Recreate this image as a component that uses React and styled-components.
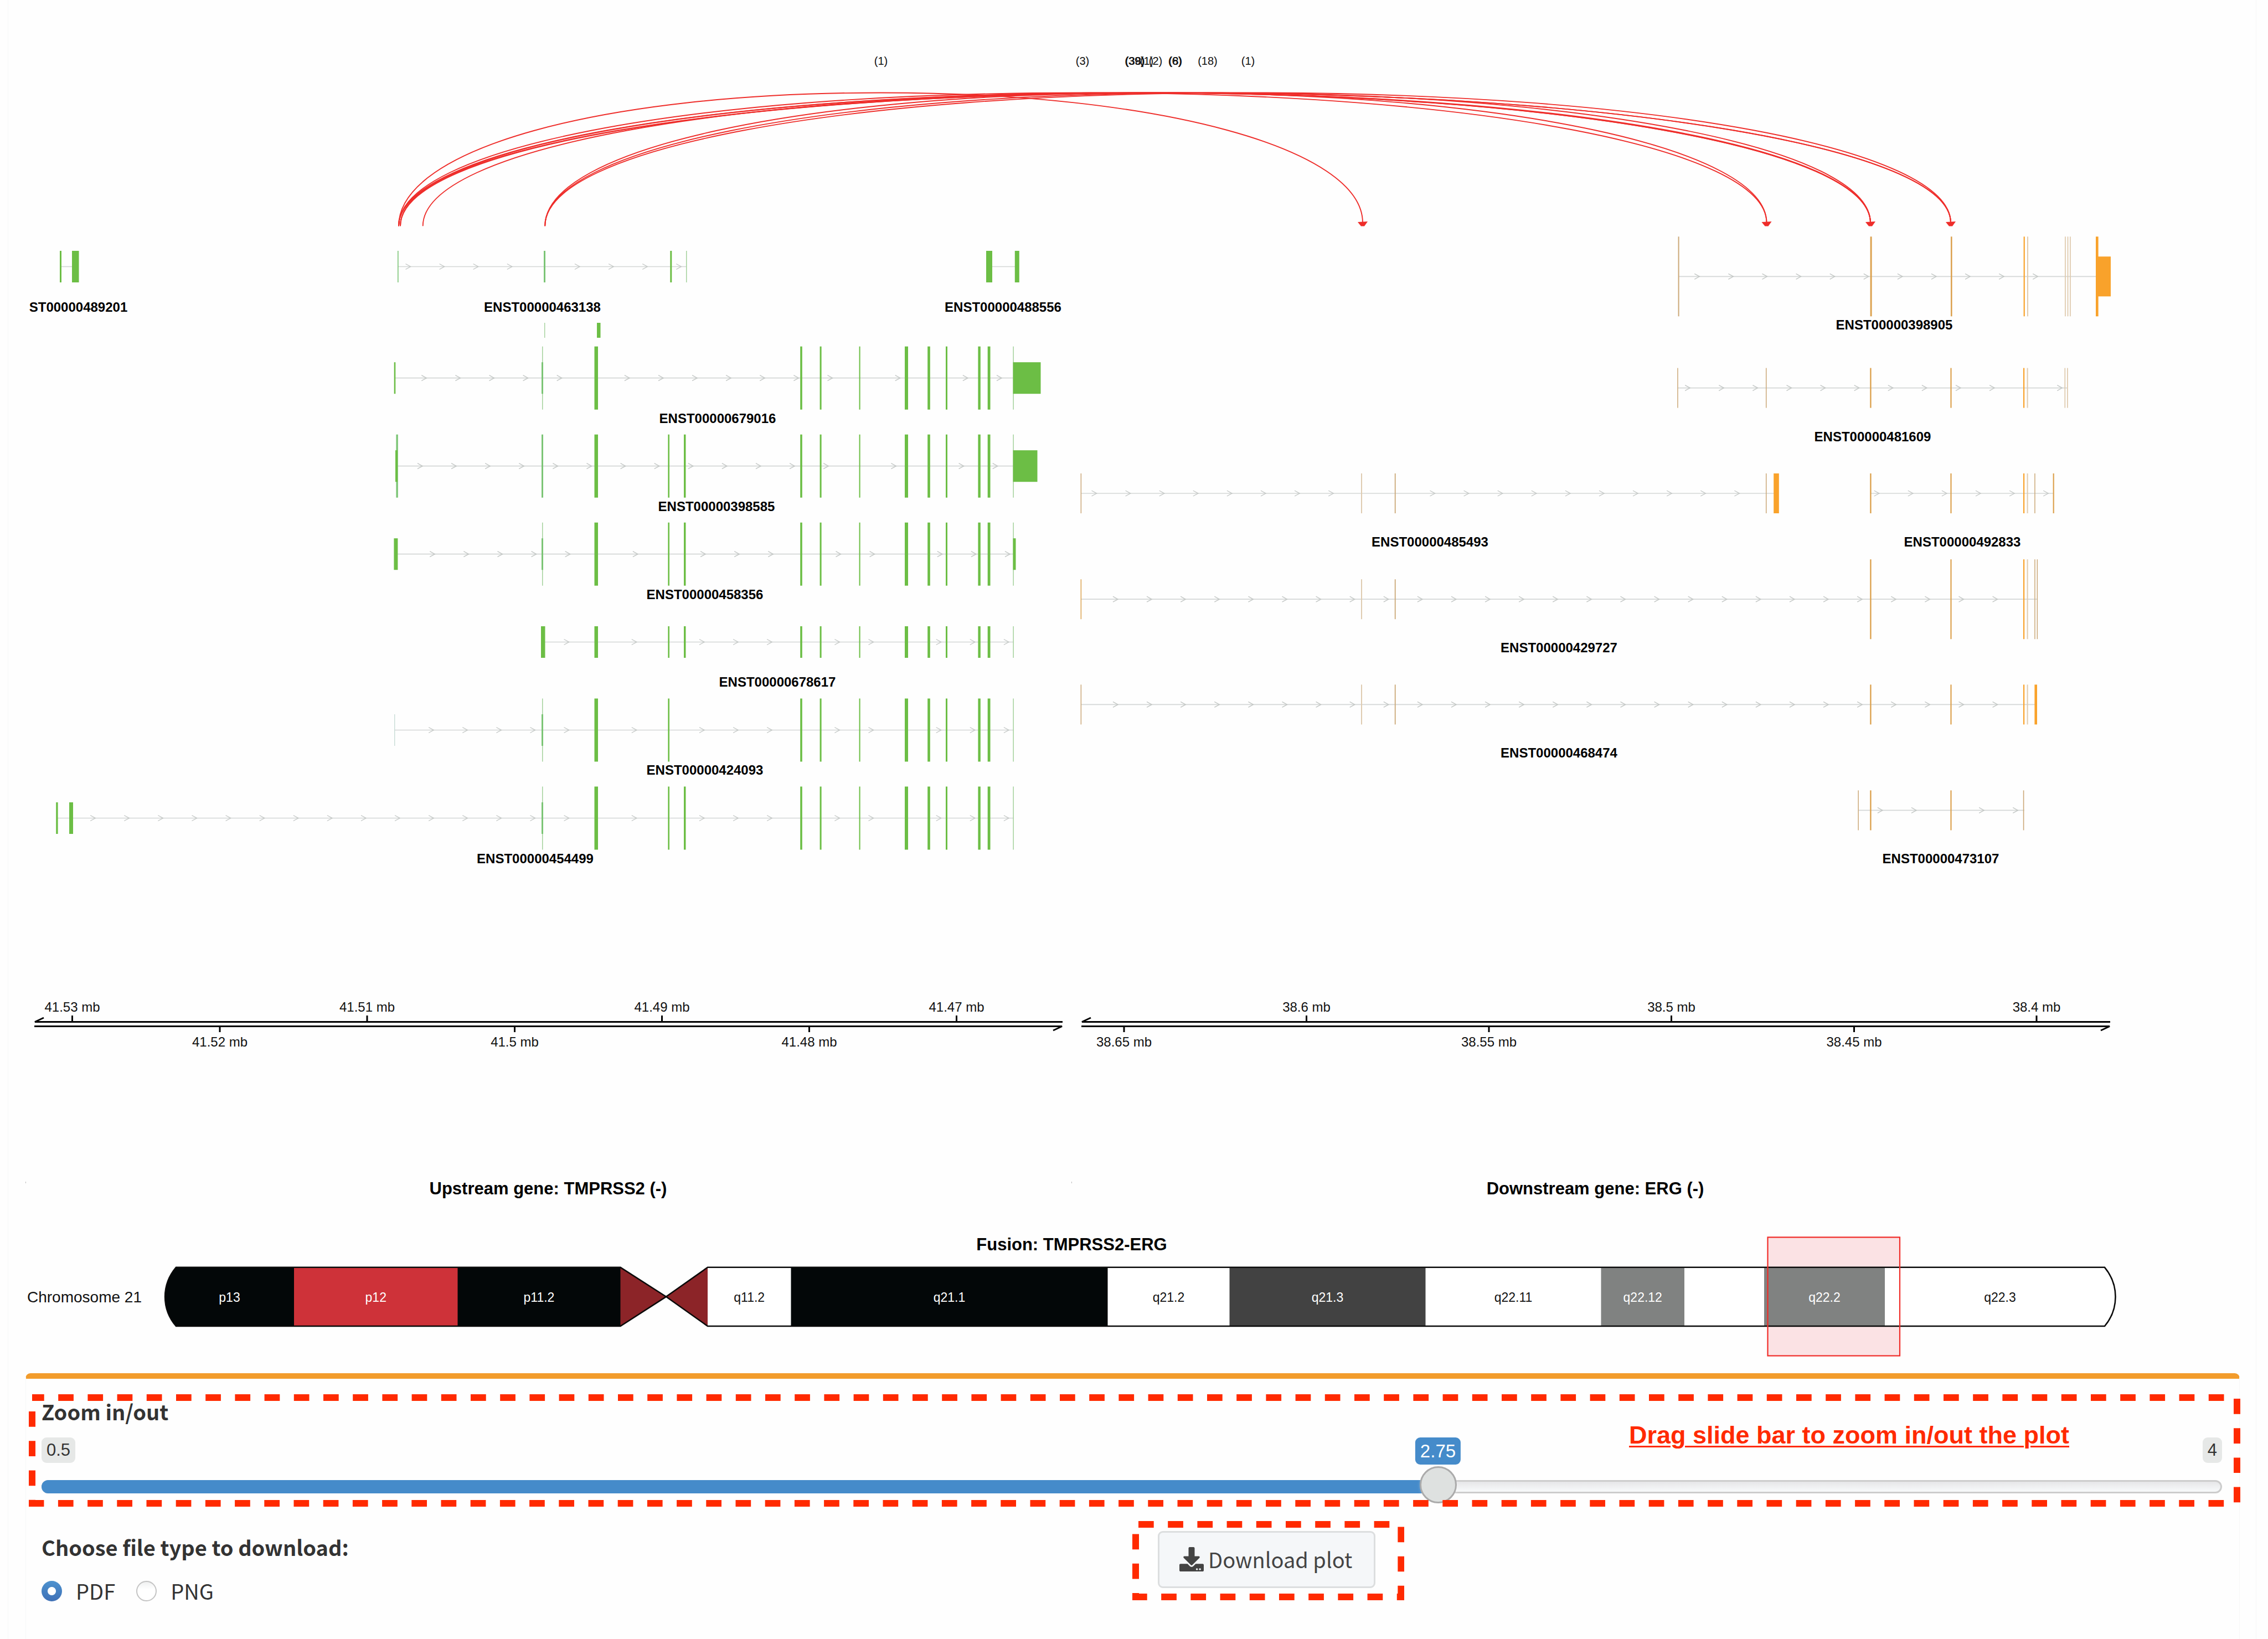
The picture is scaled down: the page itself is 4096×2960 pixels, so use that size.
import React, { useState } from "react";
import styled, { createGlobalStyle } from "styled-components";
import { FaDownload } from "react-icons/fa";

const GREEN = "#6cbe45";
const GREEN_THIN = "#7cc576";
const GREEN_PALE = "#a3d19b";
const ORANGE = "#f9a22b";
const ORANGE_THIN = "#dca250";
const TAN = "#cba878";
const TAN_PALE = "#dfcbb0";
const RED = "#ee2d2a";
const MARK_RED = "#ff2a00";

const GlobalStyle = createGlobalStyle`
  *, *::before, *::after { box-sizing: border-box; }
  body {
    margin: 0;
    background: #fefefe;
    color: #333;
    font-family: "Noto Sans CJK SC", "Open Sans", sans-serif;
    font-size: 38px;
    line-height: 54px;
  }
`;

const Page = styled.main`
  min-height: 100vh;
  padding: 0 21px 0 14px;
  display: flex;
  flex-direction: column;
`;

const Frame = styled.div`
  flex: 1;
  display: flex;
  flex-direction: column;
  border: solid #f6f7f7;
  border-width: 0 1px;
`;

const Plot = styled.svg`
  display: block;
  width: 100%;
  height: auto;
  font-family: "Liberation Sans", Arial, sans-serif;
`;

const TranscriptName = styled.text`
  font-size: 24px;
  font-weight: 700;
  text-anchor: middle;
  fill: #000;
`;

const ReadCount = styled.text`
  font-size: 20px;
  text-anchor: middle;
  fill: #111;
`;

const AxisLabel = styled.text`
  font-size: 24px;
  text-anchor: middle;
  fill: #111;
`;

const PlotTitle = styled.text`
  font-size: 31px;
  font-weight: 700;
  text-anchor: middle;
  fill: #000;
`;

const BandLabel = styled.text`
  font-size: 23px;
  text-anchor: middle;
  fill: ${(p) => p.$color};
`;

const ChromosomeLabel = styled.text`
  font-size: 28px;
  fill: #111;
`;

const Panel = styled.section`
  flex: 1;
  margin: 0 29px 0 31px;
  padding: 28px 31px 0 28px;
  border: 1px solid #f6f7f7;
  border-top: 10px solid #f29c2c;
  border-bottom: 0;
  border-radius: 9px 9px 0 0;
`;

const ZoomGroup = styled.div`
  position: relative;
  padding: 4px 0 6px;
`;

const FieldLabel = styled.label`
  display: block;
  font-weight: 700;
`;

const GroupTitle = styled.legend`
  padding: 2px 0 0;
  font-weight: 700;
`;

const Scale = styled.div`
  position: relative;
  display: flex;
  justify-content: space-between;
  align-items: flex-start;
  height: 49px;
  margin: 20px 0 3px;
  font-family: "Liberation Sans", Arial, sans-serif;
`;

const Limit = styled.span`
  padding: 3px 9px;
  border-radius: 9px;
  background: #e6e8e7;
  font-size: 31px;
  line-height: 40px;
`;

const Bubble = styled.output`
  position: absolute;
  top: 0;
  transform: translateX(-50%);
  padding: 3px 9px;
  border-radius: 9px;
  background: #458bca;
  color: #fff;
  font-size: 33px;
  line-height: 43px;
`;

const Hint = styled.strong`
  position: absolute;
  top: 47px;
  right: 276px;
  color: ${MARK_RED};
  font-family: "Liberation Sans", Arial, sans-serif;
  font-size: 45px;
  line-height: 54px;
  text-decoration: underline;
  text-decoration-thickness: 3px;
  text-underline-offset: 4px;
`;

const Slider = styled.div`
  display: grid;
  height: 67px;
  > * { grid-area: 1 / 1; }
`;

const Track = styled.div`
  height: 24px;
  margin-top: 25px;
  border: 3px solid #ccc;
  border-radius: 12px;
  background: linear-gradient(#e6e6e8, #f8fafb);
`;

const Fill = styled.div`
  height: 24px;
  margin-top: 25px;
  border-radius: 12px 0 0 12px;
  background: #458bca;
`;

const Range = styled.input`
  appearance: none;
  width: 100%;
  height: 67px;
  margin: 0;
  background: transparent;
  &::-webkit-slider-runnable-track { height: 67px; background: transparent; }
  &::-webkit-slider-thumb {
    appearance: none;
    width: 67px;
    height: 67px;
    border: 3px solid #ababab;
    border-radius: 50%;
    background: #dee1e0;
    box-shadow: 1px 1px 6px rgba(255, 255, 255, 0.3);
  }
`;

const Outline = styled.svg`
  position: absolute;
  top: ${(p) => p.$top}px;
  left: ${(p) => p.$left}px;
  width: calc(100% + ${(p) => p.$growX}px);
  height: calc(100% + ${(p) => p.$growY}px);
  pointer-events: none;
  rect {
    x: 6px;
    y: 6px;
    width: calc(100% - 12px);
    height: calc(100% - 12px);
    fill: none;
    stroke: ${MARK_RED};
    stroke-width: 12px;
    stroke-dasharray: 27.7 25.5;
  }
`;

const DownloadRow = styled.div`
  display: grid;
  grid-template-columns: 1fr 1fr;
  column-gap: 94px;
  align-items: start;
  margin-top: 44px;
`;

const FileTypes = styled.fieldset`
  margin: 0;
  padding: 0;
  border: 0;
`;

const Options = styled.div`
  display: flex;
  gap: 38px;
  margin-top: 25px;
`;

const Option = styled.label`
  display: flex;
  align-items: center;
  gap: 25px;
`;

const Radio = styled.input`
  appearance: none;
  width: 37px;
  height: 37px;
  margin: 0;
  border: 2px solid #c4c4c4;
  border-radius: 50%;
  background: linear-gradient(#f0f1f1, #fff 40%);
  &:checked {
    border: 0;
    background:
      radial-gradient(circle, #fff 0 7px, transparent 8px),
      linear-gradient(#4c92cf, #3f70b6);
  }
`;

const ButtonBox = styled.div`
  position: relative;
  justify-self: start;
`;

const DownloadButton = styled.button`
  display: flex;
  align-items: center;
  gap: 8px;
  height: 103px;
  padding: 0 39px 2px 36px;
  border: 3px solid #dcdedf;
  border-radius: 9px;
  background: #f5f7f9;
  color: #444;
  font: inherit;
  svg { width: 44px; height: 44px; }
`;

/* Exons are [x, width, colour]; "full" ones are coding, "half" ones untranslated. */
const CORE = {
  a: [978, 3, GREEN_THIN],
  aPale: [979, 1.5, GREEN_PALE],
  b: [1073.5, 6.5, GREEN],
  c: [1206.4, 2.6, GREEN],
  d: [1235, 3.5, GREEN],
};
const TAIL = [
  [1445.2, 3.6, GREEN], [1480.6, 3, GREEN], [1551.6, 2, GREEN], [1634, 6, GREEN],
  [1675.2, 4.6, GREEN], [1708, 3, GREEN], [1766.4, 4.4, GREEN], [1783.7, 4.8, GREEN],
  [1829.4, 1.5, GREEN_PALE],
];
const span = (from, to) => Array.from({ length: to - from + 1 }, (_, i) => from + i);
const SKIPS = [4, 6, 8, 9, 10, 12, 13, 15, 16, 17];

const UPSTREAM = [
  { axis: 481.5, label: 563, name: "ST00000489201", at: 141.5, line: [108, 140],
    half: [[108, 3, GREEN], [130, 12.5, GREEN]] },
  { axis: 481.5, label: 563, name: "ENST00000463138", at: 979.5, line: [718, 1240],
    half: [[718, 1.6, GREEN_THIN], [982, 3, GREEN_THIN], [1210.3, 3, GREEN], [1239, 1.5, GREEN_PALE]],
    tip: 741.5, arrows: [0, 1, 2, 3, 5, 6, 7, 8] },
  { axis: 481.5, label: 563, name: "ENST00000488556", at: 1811.5, line: [1785, 1838],
    half: [[1781, 11, GREEN], [1832.8, 8, GREEN]] },
  { axis: 682.7, label: 764, name: "ENST00000679016", at: 1296, line: [712, 1832],
    half: [[711.7, 2.6, GREEN], CORE.a, [1829.5, 50, GREEN]],
    full: [CORE.aPale, CORE.b, ...TAIL],
    tip: 770.3, arrows: [...span(0, 4), ...span(6, 12), 14, 16, 17] },
  { axis: 841.7, label: 923, name: "ENST00000398585", at: 1294, line: [715, 1832],
    half: [[714, 4, GREEN], [1829.5, 44, GREEN]],
    full: [[715.4, 3.4, GREEN_THIN], CORE.a, CORE.b, CORE.c, CORE.d, ...TAIL],
    tip: 763, arrows: [...span(0, 12), 14, 16, 17] },
  { axis: 1000.7, label: 1082, name: "ENST00000458356", at: 1273, line: [715, 1832],
    half: [[711.4, 7, GREEN], CORE.a, [1829.5, 5, GREEN]],
    full: [CORE.aPale, CORE.b, CORE.c, CORE.d, ...TAIL],
    tip: 785.3, arrows: [...span(0, 4), 6, ...span(8, 10), 12, 13, 15, 16, 17] },
  { axis: 1159.5, label: 1240, name: "ENST00000678617", at: 1404, line: [980, 1830],
    half: [[977, 7.5, GREEN], CORE.b, CORE.c, CORE.d, ...TAIL],
    tip: 783.2, arrows: SKIPS },
  { axis: 1318.5, label: 1399, name: "ENST00000424093", at: 1273, line: [712, 1830],
    half: [[712, 1.4, "#c9dcd6"], CORE.a],
    full: [CORE.aPale, CORE.b, CORE.c, ...TAIL],
    tip: 783.2, arrows: [...span(0, 3), ...SKIPS] },
  { axis: 1477.5, label: 1559, name: "ENST00000454499", at: 966.5, line: [103, 1830],
    half: [[101.2, 3.4, GREEN], [125, 7, GREEN], CORE.a],
    full: [CORE.aPale, CORE.b, CORE.c, CORE.d, ...TAIL],
    tip: 783.2, arrows: [...span(-10, 3), ...SKIPS] },
];

const EX = {
  e1: [1951.6, 1.5, TAN], e2: [2458, 2, TAN_PALE], e3: [2518.8, 1.8, TAN],
  e4: [3189, 1.5, TAN], e5: [3377.2, 2.4, ORANGE_THIN], e6: [3522.4, 2.2, ORANGE_THIN],
  e7: [3654, 2.2, ORANGE], e8: [3660.6, 2, TAN_PALE], e9: [3674.2, 1.5, TAN],
};

const DOWNSTREAM = [
  { axis: 499.3, name: "ENST00000398905", at: 3421, line: [3031, 3786],
    half: [[3785, 27, ORANGE]],
    full: [[3030.6, 2, TAN], [3377.6, 3, ORANGE_THIN], [3523, 2.6, ORANGE_THIN], [3654.6, 2.2, ORANGE],
      [3661, 2, TAN_PALE], [3729, 1.8, TAN_PALE], [3733.6, 1.8, TAN_PALE], [3738, 1.8, TAN_PALE], [3785, 4.6, ORANGE]],
    tip: 3069.3, arrows: span(0, 10) },
  { axis: 700.6, name: "ENST00000481609", at: 3382, line: [3030, 3734],
    half: [[3029.2, 1.5, TAN], EX.e4, EX.e5, EX.e6, EX.e7, EX.e8, [3728.4, 1.8, TAN_PALE], [3733, 1.8, TAN_PALE]],
    tip: 3052.2, arrows: [...span(0, 9), 11] },
  { axis: 891, name: "ENST00000485493", at: 2582.5, line: [1952, 3206],
    half: [EX.e1, EX.e2, EX.e3, EX.e4, [3203.2, 9.6, ORANGE]],
    tip: 1980.5, arrows: [...span(0, 7), ...span(10, 19)] },
  { axis: 891, name: "ENST00000492833", at: 3544, line: [3378, 3709],
    half: [EX.e5, EX.e6, EX.e7, EX.e8, EX.e9, [3707.6, 2.2, ORANGE_THIN]],
    tip: 3393.7, arrows: span(0, 5) },
  { axis: 1082.2, name: "ENST00000429727", at: 2815.5, line: [1952, 3680],
    half: [[1951.6, 1.5, ORANGE_THIN], EX.e2, EX.e3],
    full: [EX.e5, EX.e6, EX.e7, EX.e8, EX.e9, [3678.6, 1.5, TAN]],
    tip: 2019, arrows: span(0, 26) },
  { axis: 1272.4, name: "ENST00000468474", at: 2815.5, line: [1952, 3676],
    half: [EX.e1, EX.e2, EX.e3, EX.e5, EX.e6, EX.e7, EX.e8, [3674.4, 4.6, ORANGE]],
    tip: 2019, arrows: span(0, 26) },
  { axis: 1463.4, name: "ENST00000473107", at: 3505, line: [3356, 3656],
    half: [[3355.4, 1.5, TAN], EX.e5, EX.e6, [3653.8, 1.6, TAN]],
    tip: 3399.9, arrows: [0, 1, 3, 4] },
].map((t) => ({ ...t, label: Math.round(t.axis + 96) }));

function Transcript({ track, unit }) {
  const bar = (h) => ([x, w, c], i) => (
    <rect key={i} x={x} y={track.axis - h / 2} width={w} height={h} fill={c} />
  );
  return (
    <g>
      <path d={`M${track.line[0]} ${track.axis}H${track.line[1]}`} stroke="#d4d7d6" strokeWidth="1.7" />
      {(track.arrows || []).map((k) => (
        <path key={k} d={`M${track.tip + k * 61.1 - 9} ${track.axis - 5}l9 5l-9 5`}
          fill="none" stroke="#c3c7c5" strokeWidth="1.4" />
      ))}
      {(track.full || []).map(bar(unit * 2))}
      {track.half.map(bar(unit))}
      <TranscriptName x={track.at} y={track.label}>{track.name}</TranscriptName>
    </g>
  );
}

const ARCS = [
  [720, 2461], [720, 3190.5], [720, 3378], [723, 3378], [763.7, 3378], [720, 3523], [723, 3523],
  [984.2, 3190.5], [984.2, 3378], [984.2, 3523],
];
const COUNTS = [
  ["(1)", 1591], ["(3)", 1955], ["(39)", 2049], ["(38)", 2050], ["(1)", 2071], ["(2)", 2087],
  ["(6)", 2122], ["(8)", 2123], ["(18)", 2181], ["(1)", 2254],
];

function Arc({ from, to }) {
  const top = 167.5, base = 408.3, r = (to - from) / 2, mid = from + r;
  const cy = base - (base - top) * 0.58, dx = r * 0.58;
  return (
    <path fill="none" stroke={RED} strokeWidth="1.9"
      d={`M${from} ${base}C${from} ${cy} ${mid - dx} ${top} ${mid} ${top}S${to} ${cy} ${to} ${base - 6}`} />
  );
}

const AXES = [
  { from: 62, to: 1919,
    upper: [["41.53 mb", 130.5], ["41.51 mb", 663], ["41.49 mb", 1195.5], ["41.47 mb", 1727.5]],
    lower: [["41.52 mb", 397], ["41.5 mb", 929.5], ["41.48 mb", 1461.5]] },
  { from: 1953, to: 3811,
    upper: [["38.6 mb", 2359.5], ["38.5 mb", 3018.5], ["38.4 mb", 3678]],
    lower: [["38.65 mb", 2030], ["38.55 mb", 2689], ["38.45 mb", 3348.5]] },
];

function GenomeAxis({ axis }) {
  return (
    <g stroke="#000" strokeWidth="3" fill="none">
      <path d={`M${axis.from + 17} 1838L${axis.from + 1} 1845.5H${axis.to}`} />
      <path d={`M${axis.to - 17} 1861L${axis.to - 1} 1853.5H${axis.from}`} />
      {axis.upper.map(([, x]) => <path key={x} d={`M${x} 1834V1845`} />)}
      {axis.lower.map(([, x]) => <path key={x} d={`M${x} 1854V1864`} />)}
      <g stroke="none">
        {axis.upper.map(([t, x]) => <AxisLabel key={t} x={x} y="1827">{t}</AxisLabel>)}
        {axis.lower.map(([t, x]) => <AxisLabel key={t} x={x} y="1890">{t}</AxisLabel>)}
      </g>
    </g>
  );
}

const BANDS = [
  ["p13", 298, 531, "#030708", "#fff"], ["p12", 531, 826.5, "#ce3239", "#fff"],
  ["p11.2", 826.5, 1120.5, "#030708", "#fff"], ["q11.2", 1278, 1428.5, "#fff", "#111"],
  ["q21.1", 1428.5, 2000.5, "#030708", "#fff"], ["q21.2", 2000.5, 2220.5, "#fff", "#111"],
  ["q21.3", 2220.5, 2574.5, "#424242", "#fff"], ["q22.11", 2574.5, 2891.5, "#fff", "#111"],
  ["q22.12", 2891.5, 3042, "#808281", "#fff"], ["", 3042, 3186, "#fff", "#111"],
  ["q22.2", 3186, 3404, "#808281", "#fff"], ["q22.3", 3404, 3820, "#fff", "#111"],
];
const OUTLINE =
  "M318 2288.8H1120.5L1203 2341.8L1278 2288.8H3801C3827 2320 3827 2364 3801 2395H1278L1203 2341.8L1120.5 2395H318C291.5 2364 291.5 2320 318 2288.8Z";

function Ideogram() {
  return (
    <g>
      <rect x="3192" y="2233" width="239" height="216" fill="#fbe2e4" />
      <clipPath id="chromosome"><path d={OUTLINE} /></clipPath>
      <g clipPath="url(#chromosome)">
        {BANDS.map(([n, a, b, c]) => (
          <rect key={a} x={a - (a === 298 ? 4 : 0)} y="2288" width={b - a + 5} height="108" fill={c} />
        ))}
        <rect x="1120.5" y="2288" width="157.5" height="108" fill="#8c2428" />
      </g>
      <path d={OUTLINE} fill="none" stroke="#0a0a0a" strokeWidth="2.6" />
      {BANDS.filter(([n]) => n).map(([n, a, b, , color]) => (
        <BandLabel key={n} x={(a + b) / 2} y="2350.5" $color={color}>{n}</BandLabel>
      ))}
      <rect x="3192.5" y="2234.5" width="238.5" height="214" fill="none" stroke="#f02c28" strokeWidth="2.2" />
      <ChromosomeLabel x="49" y="2352">Chromosome 21</ChromosomeLabel>
    </g>
  );
}

function FusionPlot() {
  return (
    <Plot viewBox="15 0 4059 2480" role="img" aria-label="TMPRSS2-ERG fusion plot">
      {COUNTS.map(([t, x], i) => <ReadCount key={i} x={x} y="117">{t}</ReadCount>)}
      {ARCS.map(([a, b], i) => <Arc key={i} from={a} to={b} />)}
      {[2461, 3190.5, 3378, 3523].map((x) => (
        <path key={x} d={`M${x - 9} 401L${x + 9} 400L${x + 3} 408.5H${x - 3}Z`} fill={RED} />
      ))}
      <rect x="983" y="583" width="1.4" height="27" fill={GREEN_PALE} />
      <rect x="1078" y="583" width="6.5" height="27" fill={GREEN} />
      {UPSTREAM.map((t) => <Transcript key={t.name} track={t} unit={57} />)}
      {DOWNSTREAM.map((t) => <Transcript key={t.name} track={t} unit={72} />)}
      {AXES.map((a) => <GenomeAxis key={a.from} axis={a} />)}
      <PlotTitle x="990" y="2157">Upstream gene: TMPRSS2 (-)</PlotTitle>
      <PlotTitle x="2881" y="2157">Downstream gene: ERG (-)</PlotTitle>
      <PlotTitle x="1935.5" y="2258">Fusion: TMPRSS2-ERG</PlotTitle>
      <path d="M46.5 2134v3M1935.5 2134v3" stroke="#bbb" />
      <Ideogram />
    </Plot>
  );
}

const MIN = 0.5;
const MAX = 4;
const THUMB = 67;

function ZoomControl() {
  const [zoom, setZoom] = useState(2.75);
  const ratio = (zoom - MIN) / (MAX - MIN);
  const place = `calc(${THUMB / 2}px + (100% - ${THUMB}px) * ${ratio})`;
  return (
    <ZoomGroup>
      <FieldLabel htmlFor="zoom">Zoom in/out</FieldLabel>
      <Scale>
        <Limit>{MIN}</Limit>
        <Bubble htmlFor="zoom" style={{ left: place }}>{zoom}</Bubble>
        <Limit>{MAX}</Limit>
      </Scale>
      <Slider>
        <Track />
        <Fill style={{ width: place }} />
        <Range id="zoom" type="range" min={MIN} max={MAX} step="0.25" value={zoom}
          onChange={(e) => setZoom(Number(e.target.value))} />
      </Slider>
      <Hint>Drag slide bar to zoom in/out the plot</Hint>
      <Outline $top={0} $left={-23} $growX={56} $growY={0} aria-hidden="true">
        <rect strokeDashoffset="6" />
      </Outline>
    </ZoomGroup>
  );
}

export default function App() {
  const [type, setType] = useState("PDF");
  return (
    <Page>
      <GlobalStyle />
      <Frame>
        <FusionPlot />
        <Panel>
          <ZoomControl />
          <DownloadRow>
            <FileTypes>
              <GroupTitle>Choose file type to download:</GroupTitle>
              <Options>
                {["PDF", "PNG"].map((t) => (
                  <Option key={t}>
                    <Radio type="radio" name="filetype" checked={type === t} onChange={() => setType(t)} />
                    {t}
                  </Option>
                ))}
              </Options>
            </FileTypes>
            <ButtonBox>
              <DownloadButton type="button"><FaDownload />Download plot</DownloadButton>
              <Outline $top={-18} $left={-46} $growX={98} $growY={40} aria-hidden="true">
                <rect strokeDashoffset="-5" />
              </Outline>
            </ButtonBox>
          </DownloadRow>
        </Panel>
      </Frame>
    </Page>
  );
}
